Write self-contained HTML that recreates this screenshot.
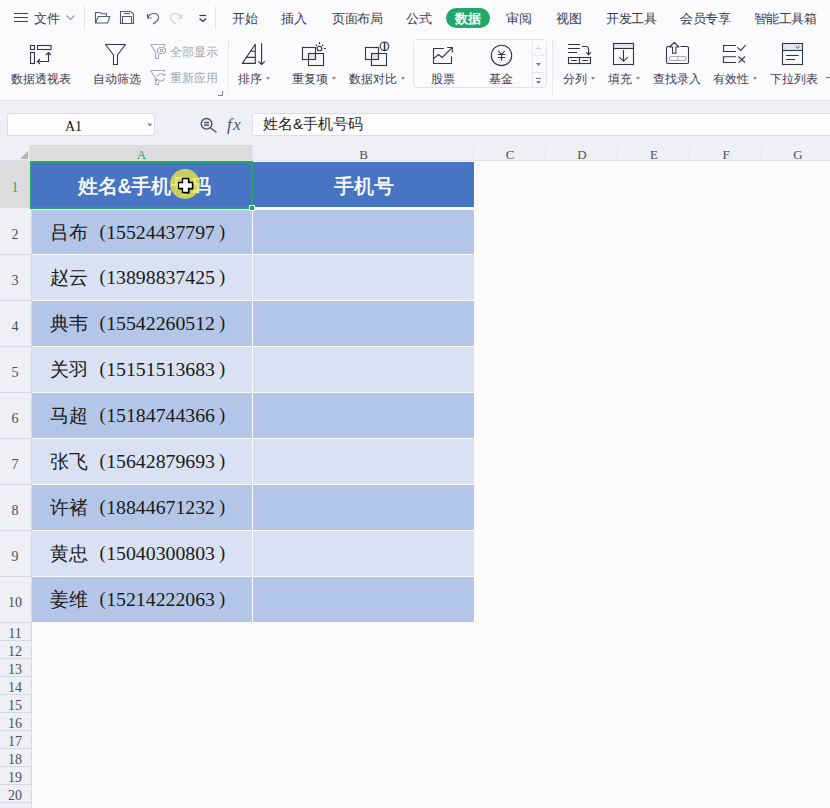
<!DOCTYPE html>
<html><head><meta charset="utf-8">
<style>
*{margin:0;padding:0;box-sizing:border-box}
html,body{width:830px;height:808px;overflow:hidden;background:#fbfbfd;font-family:"Liberation Sans",sans-serif;color:#3a3d4e}
.a{position:absolute;white-space:nowrap}
.t{font-size:12px;line-height:14px}
.tab{top:12px;font-size:12.5px}
.lbl2{top:72px}
.dd{display:inline-block;width:0;height:0;border-left:2.5px solid transparent;border-right:2.5px solid transparent;border-top:3px solid #8a8c98;vertical-align:middle;margin-left:3.5px;position:relative;top:-1px}
svg{position:absolute;overflow:visible}
.ic{fill:none;stroke:#30334a;stroke-width:1.2}
.fb{background:#eff0f5}
.cell{position:absolute;font-size:20px;line-height:24px;color:#1a1a1a;font-family:"Liberation Serif",serif}
.rh{position:absolute;left:0;width:30px;text-align:center;font-family:"Liberation Serif",serif;font-size:14px;color:#4a4e60;padding-top:3px}
.ch{position:absolute;top:147px;height:16px;text-align:center;font-family:"Liberation Serif",serif;font-size:13px;line-height:16px;color:#4a4e60}
</style></head><body>
<!-- top menu bar -->
<div class="a t tab" style="left:34px">文件</div>
<svg style="left:66px;top:15px" width="10" height="6"><path d="M0.5,0.5 L4.5,4.5 L8.5,0.5" class="ic" style="stroke:#9a9cab"/></svg>
<div class="a" style="left:84px;top:6px;width:1px;height:24px;background:#e3e4ea"></div>
<div class="a" style="left:215px;top:6px;width:1px;height:23px;border-left:1px dotted #d0d2de"></div>

<div class="a t tab" style="left:232px">开始</div>
<div class="a t tab" style="left:281px">插入</div>
<div class="a t tab" style="left:332px;letter-spacing:-0.5px">页面布局</div>
<div class="a t tab" style="left:406px">公式</div>
<div class="a" style="left:446px;top:8px;width:44px;height:20px;border-radius:10px;background:#21a869"></div>
<div class="a t tab" style="left:455px;color:#fff;font-weight:bold">数据</div>
<div class="a t tab" style="left:506px">审阅</div>
<div class="a t tab" style="left:556px">视图</div>
<div class="a t tab" style="left:606px;letter-spacing:-0.5px">开发工具</div>
<div class="a t tab" style="left:680px;letter-spacing:-0.5px">会员专享</div>
<div class="a t tab" style="left:754px;letter-spacing:-0.6px">智能工具箱</div>

<!-- ribbon labels -->
<div class="a t lbl2" style="left:11px">数据透视表</div>
<div class="a t lbl2" style="left:93px">自动筛选</div>
<div class="a t" style="left:170px;top:45px;color:#a4a6b0">全部显示</div>
<div class="a t" style="left:170px;top:71px;color:#a4a6b0">重新应用</div>
<div class="a t lbl2" style="left:238px">排序<span class="dd"></span></div>
<div class="a t lbl2" style="left:292px">重复项<span class="dd"></span></div>
<div class="a t lbl2" style="left:349px">数据对比<span class="dd"></span></div>
<div class="a t lbl2" style="left:431px">股票</div>
<div class="a t lbl2" style="left:489px">基金</div>
<div class="a t lbl2" style="left:563px">分列<span class="dd"></span></div>
<div class="a t lbl2" style="left:608px">填充<span class="dd"></span></div>
<div class="a t lbl2" style="left:653px">查找录入</div>
<div class="a t lbl2" style="left:713px">有效性<span class="dd"></span></div>
<div class="a t lbl2" style="left:770px">下拉列表</div>

<!-- formula bar -->
<div class="a fb" style="left:0;top:100px;width:830px;height:45px;border-top:1px solid #e2e3ea"></div>
<div class="a" style="left:7px;top:113px;width:148px;height:23px;background:#fdfdfe;border:1px solid #dcdde6;border-radius:2px"></div>
<div class="a" style="left:65px;top:118px;font-family:'Liberation Serif',serif;font-size:14px;line-height:18px;color:#111">A1</div>
<div class="a" style="left:252px;top:113px;width:590px;height:23px;background:#fdfdfe;border:1px solid #dcdde6;border-radius:2px"></div>
<div class="a" style="left:263px;top:112px;font-size:15px;line-height:24px;color:#262626">姓名&amp;手机号码</div>

<!-- headers -->
<div class="a fb" style="left:0;top:145px;width:830px;height:16px"></div>
<div class="a" style="left:30px;top:145px;width:223px;height:16px;background:#dcdcde"></div>
<div class="ch" style="left:30px;width:223px;color:#21a869">A</div>
<div class="ch" style="left:253px;width:221px">B</div>
<div class="ch" style="left:474px;width:72px">C</div>
<div class="ch" style="left:546px;width:72px">D</div>
<div class="ch" style="left:618px;width:72px">E</div>
<div class="ch" style="left:690px;width:72px">F</div>
<div class="ch" style="left:762px;width:72px">G</div>

<!--ICONS-->
<svg style="left:0;top:0" width="830" height="100" class="ic">
<g stroke="#30334a" stroke-width="1.1" fill="none">
<!-- hamburger -->
<path d="M14,13.5H28M14,17.5H28M14,21.5H28" stroke-width="1.2" stroke="#3c4052"/>
<!-- folder -->
<path stroke="#565b72" d="M95.5,23 V12.5 H100 L101.5,13.8 H106.5 V16.5"/>
<path stroke="#565b72" d="M95.5,23 L98.3,16.5 H109.8 L107.6,23 Z" stroke-linejoin="round"/>
<!-- save -->
<path stroke="#565b72" d="M120.5,11.5 H131 L133.5,14 V23.5 H120.5 Z"/>
<path stroke="#565b72" d="M124,13.5 H130"/>
<path stroke="#565b72" d="M122.5,23.5 V16.5 H131.5 V23.5"/>
<!-- undo -->
<path stroke="#565b72" d="M147.5,18 C150,12.5 157.5,12 158.5,17 C159,20 156.5,22 153,24"/>
<path stroke="#565b72" d="M147.5,14 V18 H151.5"/>
<!-- redo -->
<path d="M181.5,18 C179,12.5 171.5,12 170.5,17 C170,20 172.5,22 176,24" stroke="#c9cad4"/>
<path d="M181.5,14 V18 H177.5" stroke="#c9cad4"/>
<!-- qat dropdown -->
<path d="M199.5,15.5 H206" stroke-width="1.2"/>
<path d="M199.5,18.5 L202.8,21.5 L206,18.5" stroke-width="1.2"/>
<!-- pivot -->
<rect x="30.5" y="45.5" width="4" height="4"/>
<rect x="37.5" y="45.5" width="13.5" height="4"/>
<rect x="30.5" y="52.5" width="4" height="11"/>
<path d="M48.5,52.5 V61.5 H37.5"/>
<path d="M46,55 L48.5,52.5 L51,55"/>
<path d="M40,59 L37.5,61.5 L40,64"/>
<!-- funnel -->
<path d="M105.5,44.5 H125.5 L117.5,55 V64.5 H113.5 V55 Z" stroke-linejoin="round"/>
<!-- filter eye (gray) -->
<g stroke="#a9abb5">
<path d="M150.5,44.5 H164.5 V47 M150.5,44.5 L155.5,52 V58.5 H158.5 V54"/>
<ellipse cx="161.5" cy="50.5" rx="4.2" ry="3"/>
<circle cx="161.5" cy="50.5" r="1.2"/>
<path d="M150.5,70.5 H164.5 V72 M150.5,70.5 L155.5,78 V84.5 H158.5 V82"/>
<path d="M157,76.5 C158,73.5 162.5,73 164.5,75.5 M164.5,78.5 C163.5,81.5 159,82 157,79.5"/>
<path d="M163,75.5 H165 V73.5 M158.5,79.5 H156.5 V81.5"/>
</g>
<!-- sort -->
<path d="M255.3,44.2 L242.3,63.4 H255.3 Z M250.5,51.3 H255.3 M246.4,57.4 H255.3" stroke-linejoin="round"/>
<path d="M261.6,43.3 V64.5 M258.4,61.3 L261.6,64.5 L264.8,61.3"/>
<!-- duplicates -->
<rect x="308.5" y="53.5" width="7" height="6" fill="#e0e1e7" stroke="none"/>
<rect x="302.5" y="47.5" width="13" height="12"/>
<rect x="308.5" y="53.5" width="15" height="12"/>
<circle cx="319.5" cy="48.5" r="2.3"/>
<path d="M319.5,42 V44.2 M315.8,44.6 L317,45.8 M323.2,44.6 L322,45.8 M324,48.5 H326"/>
<!-- compare -->
<rect x="371.5" y="53.5" width="7" height="6" fill="#e0e1e7" stroke="none"/>
<rect x="365.5" y="47.5" width="13" height="12"/>
<rect x="371.5" y="53.5" width="15" height="12"/>
<path d="M384.5,42 A4.3,4.3 0 0 1 384.5,50.6 Z" fill="#e0e6ef" stroke="none"/>
<circle cx="384.5" cy="46.3" r="4.3"/>
<path d="M384.5,42 V50.6" stroke-width="1.4"/>
<!-- stock -->
<path d="M443.9,48.5 H433.5 V63.5 H451.5 V56.3"/>
<path d="M433.8,58.4 L438.5,54.5 L442.3,57.5 L452.2,47.6"/>
<path d="M447.2,47.5 H452.3 V52.5"/>
<!-- fund -->
<circle cx="501.5" cy="55.4" r="10.2"/>
<path d="M498.3,51.2 L501.5,54.3 L504.7,51.2 M497.9,54.5 H505.3 M497.9,57.5 H505.3 M501.5,54.3 V60.8"/>
<!-- split -->
<path d="M568,44.5 H580 M568,48.5 H580 M568,52.5 H577"/>
<path d="M582,46.5 H586 C587.8,46.5 588.6,47.5 588.6,49.5 V54.3 M586.3,52.3 L588.6,54.6 L590.9,52.3"/>
<rect x="568.5" y="57.5" width="22" height="6"/>
<path d="M579.5,57.5 V63.5 M571.2,60.5 H576.8 M582.2,60.5 H587.8"/>
<!-- fill -->
<rect x="613.5" y="43.5" width="20" height="5" fill="#e6e7ec" stroke="none"/>
<rect x="613.5" y="43.5" width="20" height="21"/>
<path d="M613.5,48.5 H633.5"/>
<path d="M623.5,50 V61 M619.3,57.2 L623.5,61.3 L627.7,57.2"/>
<!-- find entry -->
<path d="M670,46.5 H668 Q666.5,46.5 666.5,48 V62 Q666.5,63.5 668,63.5 H687 Q688.5,63.5 688.5,62 V48 Q688.5,46.5 687,46.5 H680.5"/>
<path d="M674.3,42.3 L669.5,47 H672.5 V53.3 H675.9 V47 H678.9 Z" stroke-linejoin="round"/>
<rect x="669.5" y="56.5" width="16.7" height="4" rx="2" stroke="#a9abb5"/>
<path d="M677.8,56.5 V60.5" stroke="#a9abb5"/>
<!-- validity -->
<path d="M736,45.5 H723.5 V51.5 H736 M736,56.7 H723.5 V62.5 H736"/>
<path d="M737.3,47.3 L740.7,50.4 L745.6,45.2"/>
<path d="M738.5,56.5 L745,62.7 M745,56.5 L738.5,62.7"/>
<!-- dropdown list -->
<rect x="782.5" y="43.5" width="20" height="7" fill="#e6e7ec" stroke="none"/>
<rect x="782.5" y="43.5" width="20" height="21"/>
<path d="M782.5,50.5 H802.5"/>
<path d="M795.8,46.4 L797.6,48.1 L799.4,46.4" stroke-width="1"/>
<path d="M786,55.5 H798.7 M786,59.5 H795"/>
</g>
<!-- name box dropdown -->
</svg>
<!-- separators -->
<div class="a" style="left:228px;top:40px;width:1px;height:52px;border-left:1px dotted #d4d6e0"></div>
<div class="a" style="left:413px;top:39px;width:134px;height:49px;border:1px solid #e1e3ea;border-radius:3px"></div>
<div class="a" style="left:532px;top:40px;width:1px;height:47px;border-left:1px dotted #d8dae3"></div>
<div class="a" style="left:533px;top:55px;width:13px;height:1px;border-top:1px dotted #d8dae3"></div>
<div class="a" style="left:533px;top:72px;width:13px;height:1px;border-top:1px dotted #d8dae3"></div>
<svg style="left:0;top:0" width="830" height="140">
<path d="M536,48.5 H541 M538.5,46.5 V48.5" stroke="#c8cad4" stroke-width="1" fill="none"/>
<path d="M536,63 H541 L538.5,66 Z" fill="#7c7f8e"/>
<path d="M536,78.5 H541" stroke="#7c7f8e" stroke-width="1" fill="none"/><path d="M536,81 H541 L538.5,84 Z" fill="#7c7f8e"/>
<path d="M218,95.5 H222.5 V91" stroke="#7c7f8e" stroke-width="1" fill="none"/>
<path d="M147,123.5 H152.5 L149.8,126.5 Z" fill="#8a8c98"/>
<circle cx="206.5" cy="123.8" r="5.3" stroke="#4a4e62" stroke-width="1.4" fill="none"/>
<path d="M210.3,127.8 L216.5,132.5 M204,122.5 H209 M204,125 H209" stroke="#4a4e62" stroke-width="1.3" fill="none"/>
</svg>
<div class="a" style="left:552px;top:40px;width:1px;height:56px;border-left:1px dotted #d4d6e0"></div>
<div class="a" style="left:826px;top:77px;width:4px;height:1.2px;background:#6a6d7c"></div>
<div class="a" style="left:227px;top:115px;font-family:'Liberation Serif',serif;font-style:italic;font-size:17px;line-height:20px;letter-spacing:1.5px;color:#50546a">fx</div>

<!--/ICONS-->
<!--GRID-->
<div class="a fb" style="left:0;top:161px;width:31px;height:647px"></div>
<div class="a" style="left:0;top:161px;width:30px;height:47px;background:#dcdcde"></div>
<div class="a" style="left:31px;top:208px;width:1px;height:600px;background:#d6d7e2"></div>
<div class="a" style="left:0;top:160px;width:830px;height:1px;background:#dfe0e8"></div>
<svg style="left:20px;top:151px" width="8" height="8"><path d="M0,8 L8,0 L8,8 Z" fill="#b3b3ad"/></svg>
<div class="a" style="left:29px;top:147px;width:1px;height:13px;background:#e4e5ec"></div>
<div class="a" style="left:252px;top:147px;width:1px;height:13px;background:#e4e5ec"></div>
<div class="a" style="left:473px;top:147px;width:1px;height:13px;background:#e4e5ec"></div>
<div class="a" style="left:545px;top:147px;width:1px;height:13px;background:#e4e5ec"></div>
<div class="a" style="left:617px;top:147px;width:1px;height:13px;background:#e4e5ec"></div>
<div class="a" style="left:689px;top:147px;width:1px;height:13px;background:#e4e5ec"></div>
<div class="a" style="left:761px;top:147px;width:1px;height:13px;background:#e4e5ec"></div>
<div class="a" style="left:31px;top:161px;width:222px;height:47px;background:#4775c3"></div>
<div class="a" style="left:253px;top:162px;width:221px;height:45px;background:#4775c3"></div>
<div class="a" style="left:32px;top:210px;width:220px;height:44px;background:#b4c6e7"></div>
<div class="a" style="left:253px;top:210px;width:221px;height:44px;background:#b4c6e7"></div>
<div class="cell" style="left:50px;top:221px"><span style="font-size:19px;position:relative;top:-1px">吕布</span><span style="margin-left:11.5px;font-size:18.5px;position:relative;top:-2px">(</span><span style="font-size:19.8px;margin-left:0.5px;position:relative;top:-1px">15524437797</span><span style="font-size:18.5px;margin-left:4px;position:relative;top:-2px">)</span></div>
<div class="a" style="left:0;top:254px;width:31px;height:1px;background:#d6d7e2"></div>
<div class="rh" style="top:210px;height:44px;line-height:44px">2</div>
<div class="a" style="left:32px;top:255px;width:220px;height:45px;background:#d9e1f2"></div>
<div class="a" style="left:253px;top:255px;width:221px;height:45px;background:#d9e1f2"></div>
<div class="cell" style="left:50px;top:266px"><span style="font-size:19px;position:relative;top:-1px">赵云</span><span style="margin-left:11.5px;font-size:18.5px;position:relative;top:-2px">(</span><span style="font-size:19.8px;margin-left:0.5px;position:relative;top:-1px">13898837425</span><span style="font-size:18.5px;margin-left:4px;position:relative;top:-2px">)</span></div>
<div class="a" style="left:0;top:300px;width:31px;height:1px;background:#d6d7e2"></div>
<div class="rh" style="top:255px;height:45px;line-height:45px">3</div>
<div class="a" style="left:32px;top:301px;width:220px;height:45px;background:#b4c6e7"></div>
<div class="a" style="left:253px;top:301px;width:221px;height:45px;background:#b4c6e7"></div>
<div class="cell" style="left:50px;top:312px"><span style="font-size:19px;position:relative;top:-1px">典韦</span><span style="margin-left:11.5px;font-size:18.5px;position:relative;top:-2px">(</span><span style="font-size:19.8px;margin-left:0.5px;position:relative;top:-1px">15542260512</span><span style="font-size:18.5px;margin-left:4px;position:relative;top:-2px">)</span></div>
<div class="a" style="left:0;top:346px;width:31px;height:1px;background:#d6d7e2"></div>
<div class="rh" style="top:301px;height:45px;line-height:45px">4</div>
<div class="a" style="left:32px;top:347px;width:220px;height:45px;background:#d9e1f2"></div>
<div class="a" style="left:253px;top:347px;width:221px;height:45px;background:#d9e1f2"></div>
<div class="cell" style="left:50px;top:358px"><span style="font-size:19px;position:relative;top:-1px">关羽</span><span style="margin-left:11.5px;font-size:18.5px;position:relative;top:-2px">(</span><span style="font-size:19.8px;margin-left:0.5px;position:relative;top:-1px">15151513683</span><span style="font-size:18.5px;margin-left:4px;position:relative;top:-2px">)</span></div>
<div class="a" style="left:0;top:392px;width:31px;height:1px;background:#d6d7e2"></div>
<div class="rh" style="top:347px;height:45px;line-height:45px">5</div>
<div class="a" style="left:32px;top:393px;width:220px;height:45px;background:#b4c6e7"></div>
<div class="a" style="left:253px;top:393px;width:221px;height:45px;background:#b4c6e7"></div>
<div class="cell" style="left:50px;top:404px"><span style="font-size:19px;position:relative;top:-1px">马超</span><span style="margin-left:11.5px;font-size:18.5px;position:relative;top:-2px">(</span><span style="font-size:19.8px;margin-left:0.5px;position:relative;top:-1px">15184744366</span><span style="font-size:18.5px;margin-left:4px;position:relative;top:-2px">)</span></div>
<div class="a" style="left:0;top:438px;width:31px;height:1px;background:#d6d7e2"></div>
<div class="rh" style="top:393px;height:45px;line-height:45px">6</div>
<div class="a" style="left:32px;top:439px;width:220px;height:45px;background:#d9e1f2"></div>
<div class="a" style="left:253px;top:439px;width:221px;height:45px;background:#d9e1f2"></div>
<div class="cell" style="left:50px;top:450px"><span style="font-size:19px;position:relative;top:-1px">张飞</span><span style="margin-left:11.5px;font-size:18.5px;position:relative;top:-2px">(</span><span style="font-size:19.8px;margin-left:0.5px;position:relative;top:-1px">15642879693</span><span style="font-size:18.5px;margin-left:4px;position:relative;top:-2px">)</span></div>
<div class="a" style="left:0;top:484px;width:31px;height:1px;background:#d6d7e2"></div>
<div class="rh" style="top:439px;height:45px;line-height:45px">7</div>
<div class="a" style="left:32px;top:485px;width:220px;height:45px;background:#b4c6e7"></div>
<div class="a" style="left:253px;top:485px;width:221px;height:45px;background:#b4c6e7"></div>
<div class="cell" style="left:50px;top:496px"><span style="font-size:19px;position:relative;top:-1px">许褚</span><span style="margin-left:11.5px;font-size:18.5px;position:relative;top:-2px">(</span><span style="font-size:19.8px;margin-left:0.5px;position:relative;top:-1px">18844671232</span><span style="font-size:18.5px;margin-left:4px;position:relative;top:-2px">)</span></div>
<div class="a" style="left:0;top:530px;width:31px;height:1px;background:#d6d7e2"></div>
<div class="rh" style="top:485px;height:45px;line-height:45px">8</div>
<div class="a" style="left:32px;top:531px;width:220px;height:45px;background:#d9e1f2"></div>
<div class="a" style="left:253px;top:531px;width:221px;height:45px;background:#d9e1f2"></div>
<div class="cell" style="left:50px;top:542px"><span style="font-size:19px;position:relative;top:-1px">黄忠</span><span style="margin-left:11.5px;font-size:18.5px;position:relative;top:-2px">(</span><span style="font-size:19.8px;margin-left:0.5px;position:relative;top:-1px">15040300803</span><span style="font-size:18.5px;margin-left:4px;position:relative;top:-2px">)</span></div>
<div class="a" style="left:0;top:576px;width:31px;height:1px;background:#d6d7e2"></div>
<div class="rh" style="top:531px;height:45px;line-height:45px">9</div>
<div class="a" style="left:32px;top:577px;width:220px;height:45px;background:#b4c6e7"></div>
<div class="a" style="left:253px;top:577px;width:221px;height:45px;background:#b4c6e7"></div>
<div class="cell" style="left:50px;top:588px"><span style="font-size:19px;position:relative;top:-1px">姜维</span><span style="margin-left:11.5px;font-size:18.5px;position:relative;top:-2px">(</span><span style="font-size:19.8px;margin-left:0.5px;position:relative;top:-1px">15214222063</span><span style="font-size:18.5px;margin-left:4px;position:relative;top:-2px">)</span></div>
<div class="a" style="left:0;top:622px;width:31px;height:1px;background:#d6d7e2"></div>
<div class="rh" style="top:577px;height:45px;line-height:45px">10</div>
<div class="rh" style="top:161px;height:47px;line-height:47px;color:#21a869">1</div>
<div class="a" style="left:0;top:207px;width:30px;height:1px;background:#d6d7e2"></div>
<div class="a" style="left:0;top:640px;width:31px;height:1px;background:#d6d7e2"></div>
<div class="rh" style="top:622px;height:18px;line-height:18px">11</div>
<div class="a" style="left:0;top:658px;width:31px;height:1px;background:#d6d7e2"></div>
<div class="rh" style="top:640px;height:18px;line-height:18px">12</div>
<div class="a" style="left:0;top:676px;width:31px;height:1px;background:#d6d7e2"></div>
<div class="rh" style="top:658px;height:18px;line-height:18px">13</div>
<div class="a" style="left:0;top:694px;width:31px;height:1px;background:#d6d7e2"></div>
<div class="rh" style="top:676px;height:18px;line-height:18px">14</div>
<div class="a" style="left:0;top:712px;width:31px;height:1px;background:#d6d7e2"></div>
<div class="rh" style="top:694px;height:18px;line-height:18px">15</div>
<div class="a" style="left:0;top:730px;width:31px;height:1px;background:#d6d7e2"></div>
<div class="rh" style="top:712px;height:18px;line-height:18px">16</div>
<div class="a" style="left:0;top:748px;width:31px;height:1px;background:#d6d7e2"></div>
<div class="rh" style="top:730px;height:18px;line-height:18px">17</div>
<div class="a" style="left:0;top:766px;width:31px;height:1px;background:#d6d7e2"></div>
<div class="rh" style="top:748px;height:18px;line-height:18px">18</div>
<div class="a" style="left:0;top:784px;width:31px;height:1px;background:#d6d7e2"></div>
<div class="rh" style="top:766px;height:18px;line-height:18px">19</div>
<div class="a" style="left:0;top:802px;width:31px;height:1px;background:#d6d7e2"></div>
<div class="rh" style="top:784px;height:18px;line-height:18px">20</div>
<div class="a" style="left:0;top:820px;width:31px;height:1px;background:#d6d7e2"></div>
<div class="rh" style="top:802px;height:18px;line-height:18px">21</div>
<div class="a" style="left:78px;top:171px;font-size:19.5px;line-height:30px;-webkit-text-stroke:0.5px #fff;color:#fff">姓名&amp;手机号码</div>
<div class="a" style="left:334px;top:171px;font-size:19.5px;line-height:30px;-webkit-text-stroke:0.5px #fff;color:#fff">手机号</div>
<div class="a" style="left:30px;top:161px;width:223px;height:48px;border:2px solid #1fa865"></div>
<div class="a" style="left:249px;top:205px;width:6px;height:6px;background:#1fa865;border:1px solid #fff"></div>
<div class="a" style="left:170px;top:169px;width:30px;height:30px;border-radius:50%;background:rgba(236,232,70,0.78)"></div>
<svg style="left:177px;top:177px" width="17" height="17"><path d="M5.5,1.5 H11.5 V5.5 H15.5 V11.5 H11.5 V15.5 H5.5 V11.5 H1.5 V5.5 H5.5 Z" fill="#000" transform="translate(1,1)"/><path d="M5.5,1.5 H11.5 V5.5 H15.5 V11.5 H11.5 V15.5 H5.5 V11.5 H1.5 V5.5 H5.5 Z" fill="#fff" stroke="#000" stroke-width="1.3"/></svg>
<!--/GRID-->
</body></html>
